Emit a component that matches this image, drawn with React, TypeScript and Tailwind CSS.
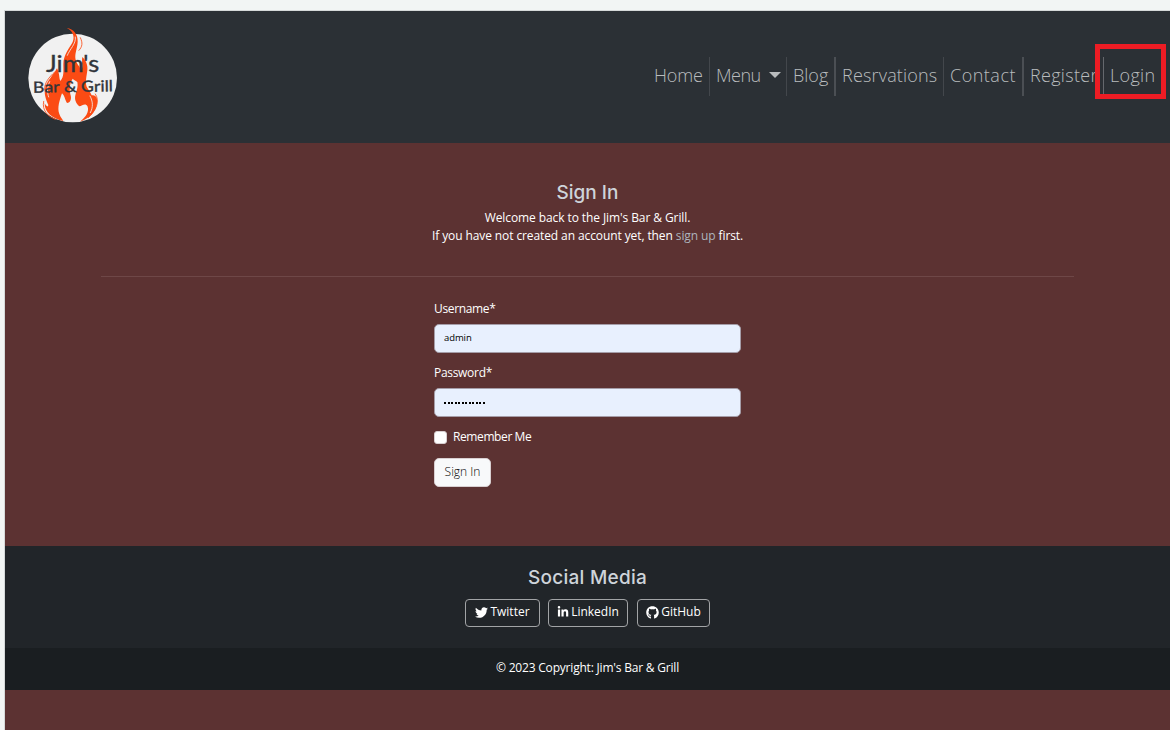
import React from "react";
import { FaTwitter, FaLinkedinIn, FaGithub } from "react-icons/fa";

function Logo() {
  return (
    <svg viewBox="75 75 285 300" className="block h-[100px] w-[95px]" aria-label="Jim's Bar & Grill">
      <circle cx="218" cy="234" r="133" fill="#f1f1f1" />
      <path
        fill="#fb4b14"
        d="M200 84C221 87 234 103 233 125C232 145 225 157 226 174C228 190 239 199 244 211C250 198 244 187 247 171C257 180 264 194 262 211C260 229 255 246 260 260C265 270 272 276 275 286C288 283 294 296 291 311C287 335 270 354 240 365C256 351 268 337 263 320C256 307 247 318 238 319C228 311 223 299 226 286C229 272 235 263 232 246C228 242 222 240 218 236C209 250 207 266 211 283C216 297 211 309 201 309C195 301 194 286 186 280C179 300 171 324 178 342C182 353 188 359 190 363C158 357 133 337 134 310C139 320 144 322 145 315C137 297 131 280 136 262C142 242 158 228 171 205C179 220 177 234 181 243C193 230 190 213 190 193C190 164 208 145 218 126C226 107 216 91 200 84Z"
      />
      <g fill="none" stroke="#fb4b14" strokeWidth="2.5" strokeLinecap="round">
        <path d="M241 113C249 129 247 140 237 151" />
        <path d="M134 269C132 249 148 231 163 217" />
        <path d="M131 304C125 331 144 350 166 358" />
        <path d="M286 282C301 303 288 332 265 353" />
      </g>
      <g fill="none" stroke="#f1f1f1" strokeWidth="2.5" strokeLinecap="round">
        <path d="M226 111C229 132 209 147 202 166" />
        <path d="M183 308C174 328 181 347 192 358" />
        <path d="M270 288C279 304 280 322 271 338" />
        <path d="M149 245C141 263 141 276 146 291" />
      </g>
      <g fill="#30343a" stroke="#30343a" strokeWidth="1" fontFamily="Lato, 'Open Sans', sans-serif" fontWeight="400">
        <text x="138" y="216" fontSize="69" textLength="160" lengthAdjust="spacingAndGlyphs">Jim's</text>
        <text x="99" y="276" fontSize="46" textLength="240" lengthAdjust="spacingAndGlyphs" transform="rotate(-1 218 265)">Bar &amp; Grill</text>
      </g>
    </svg>
  );
}

const navItem = "flex h-[39px] items-center border-r pl-[6px] pb-[3px] whitespace-nowrap";

export default function App() {
  return (
    <div className="flex h-[730px] w-[1170px] flex-col overflow-hidden bg-[#f2f5f4] pt-[10px] pl-[4px] font-['Open_Sans','Noto_Sans',sans-serif] text-[12px] text-white">
      <div className="flex flex-1 flex-col border-t border-l border-[#d5d9d9] bg-[#5c3232]">
        <header className="flex h-[132px] items-start justify-between bg-[#2b3035] pl-5">
          <div className="pt-[14px]">
            <Logo />
          </div>
          <nav className="mt-[46px] mr-[8px] flex font-['Open_Sans',sans-serif] text-[18px] font-[350] text-[#b9bcbe]">
            <a className={`${navItem} w-[62px] border-[#43474c]`}><span className="tracking-[-0.1px]">Home</span></a>
            <a className={`${navItem} w-[77px] gap-[8px] border-[#43474c]`}>
              <span className="tracking-[-0.5px]">Menu</span>
              <svg viewBox="0 0 12 6" className="h-[6px] w-[12px] fill-current"><path d="M0 0h12L6 6z" /></svg>
            </a>
            <a className={`${navItem} w-[49px] border-r-2 border-[#4b4f54]`}><span>Blog</span></a>
            <a className={`${navItem} w-[108px] border-[#43474c]`}><span className="tracking-[0.18px]">Resrvations</span></a>
            <a className={`${navItem} w-[80px] border-r-2 border-[#4b4f54]`}><span className="tracking-[0.5px]">Contact</span></a>
            <a className={`${navItem} w-[80px] border-[#65686d]`}><span className="tracking-[0.3px]">Register</span></a>
            <a className="relative flex h-[39px] w-[58px] items-center pb-[3px] pl-[6px]">
              <span className="tracking-[0.3px]">Login</span>
              <span className="absolute -top-[13px] -left-[9px] h-[55px] w-[71px] border-[5px] border-[#ed1c24]" />
            </a>
          </nav>
        </header>

        <main className="flex h-[403px] flex-col items-center">
          <h1 className="mt-[37px] font-['Inter',sans-serif] text-[19px] leading-[26px] font-medium text-[#ced4da]"><span>Sign In</span></h1>
          <p className="mt-[3px] text-center leading-[18px]">
            <span className="tracking-[-0.09px]">Welcome back to the Jim's Bar &amp; Grill.</span>
            <br />
            <span className="tracking-[-0.1px]">If you have not created an account yet, then <a className="text-[#adb5bd]">sign up</a> first.</span>
          </p>
          <hr className="mt-[31px] w-[973px] border-t border-[#6e4747]" />
          <form className="mt-[23px] flex w-[307px] flex-col items-start">
            <label className="leading-[18px]"><span className="tracking-[-0.35px]">Username*</span></label>
            <div className="mt-[6px] flex h-[29px] w-full items-center rounded-[5px] border border-[#a59da8] bg-[#e8f0fe] pl-[9px] text-[9.5px] text-black"><span className="tracking-[-0.1px]">admin</span></div>
            <label className="mt-[11px] leading-[18px]"><span className="tracking-[-0.3px]">Password*</span></label>
            <div className="mt-[6px] flex h-[29px] w-full items-center gap-[1.5px] rounded-[5px] border border-[#a59da8] bg-[#e8f0fe] pl-[9px]">
              {Array.from({ length: 12 }, (_, i) => (
                <i key={i} className="h-[2px] w-[2px] bg-black" />
              ))}
            </div>
            <label className="mt-[11px] flex items-center gap-[6px] leading-[18px]">
              <i className="mt-[1px] h-[13px] w-[13px] rounded-[3px] border border-[#d8cfd1] bg-white" />
              <span className="tracking-[-0.4px]">Remember Me</span>
            </label>
            <button type="button" className="mt-[12px] flex h-[29px] w-[57px] items-center justify-center rounded-[5px] border border-[#d8cfd1] bg-[#f8f9fa] pb-[2px] font-light text-black"><span>Sign In</span></button>
          </form>
        </main>

        <footer className="flex flex-col items-center">
          <section className="flex h-[102px] w-full flex-col items-center bg-[#212529]">
            <h2 className="mt-[19px] font-['Inter',sans-serif] text-[19px] leading-[26px] font-medium text-[#ced4da]"><span className="tracking-[0.25px]">Social Media</span></h2>
            <div className="mt-[8px] flex h-[28px]">
              <a className="mr-[8px] flex w-[75px] items-center justify-center gap-[2px] rounded-[4px] border border-[#a2a4a6] pb-[2px]"><FaTwitter size={13} /><span>Twitter</span></a>
              <a className="mr-[9px] flex w-[80px] items-center justify-center gap-[2px] rounded-[4px] border border-[#a2a4a6] pb-[2px]"><FaLinkedinIn size={12} /><span>LinkedIn</span></a>
              <a className="flex w-[73px] items-center justify-center gap-[2px] rounded-[4px] border border-[#a2a4a6] pb-[2px]"><FaGithub size={13} /><span>GitHub</span></a>
            </div>
          </section>
          <div className="flex h-[42px] w-full items-center justify-center bg-[#1a1e21] pb-[2px]"><span className="tracking-[-0.2px]">© 2023 Copyright: Jim's Bar &amp; Grill</span></div>
        </footer>
      </div>
    </div>
  );
}
